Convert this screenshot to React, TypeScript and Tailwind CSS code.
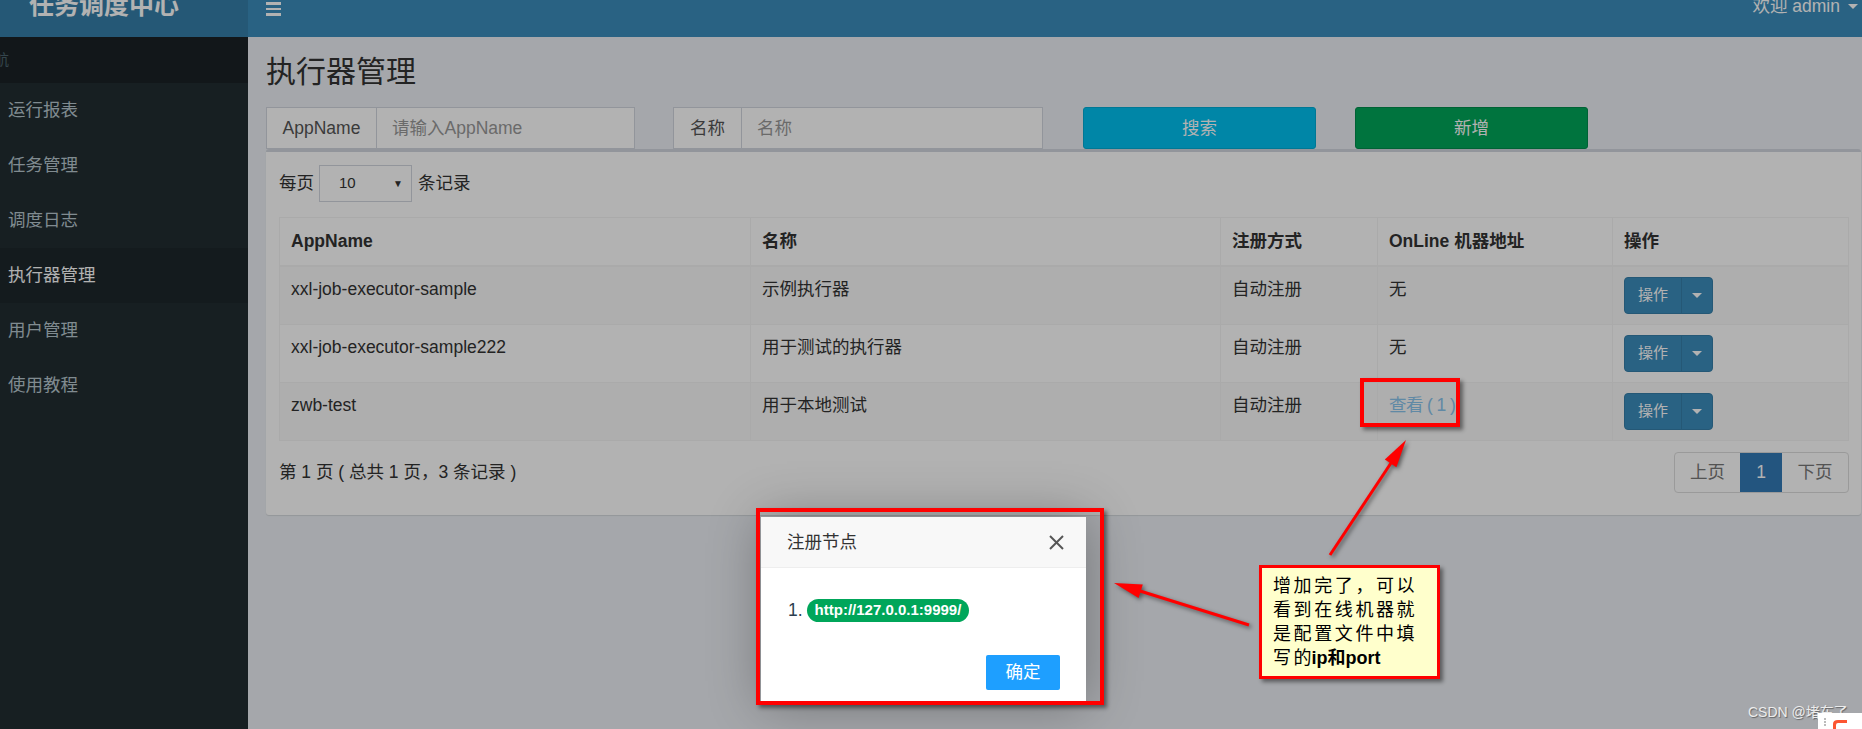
import React from 'react';

interface Executor {
  appName: string;
  title: string;
  regType: string;
  online: number;
}

const executors: Executor[] = [
  { appName: 'xxl-job-executor-sample', title: '示例执行器', regType: '自动注册', online: 0 },
  { appName: 'xxl-job-executor-sample222', title: '用于测试的执行器', regType: '自动注册', online: 0 },
  { appName: 'zwb-test', title: '用于本地测试', regType: '自动注册', online: 1 },
];

const menu = ['运行报表', '任务管理', '调度日志', '执行器管理', '用户管理', '使用教程'];

const Caret: React.FC<{ color?: string }> = ({ color = 'border-t-white' }) => (
  <span className={`inline-block w-0 h-0 border-x-[5px] border-x-transparent border-t-[5px] ${color}`} />
);

const OpButton: React.FC = () => (
  <div className="flex h-[37px] w-[89px] rounded-[4px] border border-[#367fa9] bg-[#3c8dbc] text-white">
    <div className="flex w-[56px] items-center justify-center text-[15px]">操作</div>
    <div className="flex flex-1 items-center justify-center border-l border-[#367fa9]">
      <Caret />
    </div>
  </div>
);

const App: React.FC = () => {
  return (
    <div className="relative w-[1862px] h-[729px] overflow-hidden bg-[#222d32] font-['Liberation_Sans','Noto_Sans_CJK_SC',sans-serif] text-[#333]">
      {/* page, scrolled 25px down */}
      <div className="-mt-[25px] flex flex-col">
        <header className="flex h-[62px]">
          <div className="flex w-[248px] items-center bg-[#367fa9] pl-[29px] text-[25px] font-bold text-white">
            任务调度中心
          </div>
          <div className="flex flex-1 items-center justify-between bg-[#3c8dbc] pl-[18px] text-white">
            <div className="flex flex-col gap-[3px] pt-[6px]">
              <span className="block h-[2.5px] w-[15px] bg-white" />
              <span className="block h-[2.5px] w-[15px] bg-white" />
              <span className="block h-[2.5px] w-[15px] bg-white" />
            </div>
            <div className="flex items-center gap-[8px] pr-[4px] text-[17.5px]">
              <span>欢迎 admin</span>
              <Caret />
            </div>
          </div>
        </header>

        <div className="flex h-[692px]">
          <aside className="w-[248px] shrink-0 bg-[#222d32]">
            <div className="flex h-[46px] items-center overflow-hidden bg-[#1a2226] text-[15px] text-[#4b646f]">
              <span className="-ml-[21px]">导航</span>
            </div>
            {menu.map((m) => (
              <div
                key={m}
                className={
                  m === '执行器管理'
                    ? 'flex h-[55px] items-center bg-[#1e282c] pl-[8px] text-[17.5px] text-white'
                    : 'flex h-[55px] items-center pl-[8px] text-[17.5px] text-[#b8c7ce]'
                }
              >
                {m}
              </div>
            ))}
          </aside>

          <main className="flex-1 bg-[#ecf0f5] pl-[18px] pr-[2px]">
            <h1 className="pt-[18px] text-[30px] leading-[33px]">执行器管理</h1>

            <div className="mt-[19px] flex h-[42px]">
              <div className="flex w-[369px] border border-[#d2d6de] bg-white text-[17.5px]">
                <div className="flex w-[110px] items-center justify-center border-r border-[#d2d6de] text-[#555]">AppName</div>
                <div className="flex flex-1 items-center pl-[15px] text-[#999]">请输入AppName</div>
              </div>
              <div className="ml-[38px] flex w-[370px] border border-[#d2d6de] bg-white text-[17.5px]">
                <div className="flex w-[68px] items-center justify-center border-r border-[#d2d6de] text-[#555]">名称</div>
                <div className="flex flex-1 items-center pl-[15px] text-[#999]">名称</div>
              </div>
              <button className="ml-[40px] w-[233px] rounded-[3px] border border-[#00acd6] bg-[#00c0ef] text-[17.5px] text-white">搜索</button>
              <button className="ml-[39px] w-[233px] rounded-[3px] border border-[#008d4c] bg-[#00a65a] text-[17.5px] text-white">新增</button>
            </div>

            <div className="rounded-[3px] border-t-[3px] border-[#d2d6de] bg-white pb-[22px] pl-[13px] pr-[12px] pt-[13px] shadow-[0_1px_1px_rgba(0,0,0,0.1)]">
              <div className="flex h-[37px] items-center text-[17.5px]">
                <span>每页</span>
                <div className="ml-[5px] flex h-[37px] w-[93px] items-center justify-between border border-[#d2d6de] pl-[19px] pr-[8px] text-[15px]">
                  <span>10</span>
                  <span className="text-[10px]">▼</span>
                </div>
                <span className="ml-[6px]">条记录</span>
              </div>

              <table className="mt-[15px] w-[1569px] table-fixed border-collapse text-[17.5px]">
                <colgroup>
                  <col className="w-[471px]" />
                  <col className="w-[470px]" />
                  <col className="w-[157px]" />
                  <col className="w-[235px]" />
                  <col className="w-[236px]" />
                </colgroup>
                <thead>
                  <tr>
                    {['AppName', '名称', '注册方式', 'OnLine 机器地址', '操作'].map((h) => (
                      <th key={h} className="border border-b-2 border-[#f4f4f4] px-[11px] py-[11px] text-left font-bold leading-[25px]">
                        {h}
                      </th>
                    ))}
                  </tr>
                </thead>
                <tbody>
                  {executors.map((e, i) => (
                    <tr key={e.appName} className={i % 2 === 0 ? 'bg-[#f9f9f9]' : 'bg-white'}>
                      <td className="border border-[#f4f4f4] px-[11px] py-[10px] align-top leading-[25px]">{e.appName}</td>
                      <td className="border border-[#f4f4f4] px-[11px] py-[10px] align-top leading-[25px]">{e.title}</td>
                      <td className="border border-[#f4f4f4] px-[11px] py-[10px] align-top leading-[25px]">{e.regType}</td>
                      <td className="border border-[#f4f4f4] px-[11px] py-[10px] align-top leading-[25px]">
                        {e.online ? <span className="tracking-[-0.6px] text-[#8ac4ec]">查看 ( {e.online} )</span> : '无'}
                      </td>
                      <td className="border border-[#f4f4f4] px-[11px] py-[10px] align-top">
                        <OpButton />
                      </td>
                    </tr>
                  ))}
                </tbody>
              </table>

              <div className="mt-[11px] flex items-center justify-between text-[17.5px]">
                <span>第 1 页 ( 总共 1 页，3 条记录 )</span>
                <div className="flex h-[41px] overflow-hidden rounded-[4px] border border-[#ddd] text-[#777]">
                  <div className="flex w-[65px] items-center justify-center">上页</div>
                  <div className="flex w-[42px] items-center justify-center bg-[#337ab7] text-white">1</div>
                  <div className="flex w-[66px] items-center justify-center">下页</div>
                </div>
              </div>
            </div>
          </main>
        </div>
      </div>

      {/* modal backdrop */}
      <div className="absolute inset-0 bg-black/30" />

      {/* modal */}
      <div className="absolute left-[761px] top-[517px] h-[188px] w-[325px] overflow-hidden bg-white shadow-[1px_1px_50px_rgba(0,0,0,0.3)]">
        <div className="flex h-[51px] items-center justify-between border-b border-[#eee] bg-[#f8f8f8] pl-[26px] pr-[22px] text-[17.5px]">
          <span>注册节点</span>
          <svg width="15" height="15" viewBox="0 0 15 15" stroke="#555" strokeWidth="2">
            <line x1="1" y1="1" x2="14" y2="14" />
            <line x1="14" y1="1" x2="1" y2="14" />
          </svg>
        </div>
        <div className="pl-[27px] pt-[31px]">
          <div className="flex h-[23px] items-center gap-[4px] text-[17.5px] text-[#2c3e50]">
            <span>1.</span>
            <span className="flex h-[23px] items-center rounded-full bg-[#00a65a] px-[8px] text-[15px] font-bold text-white">
              http://127.0.0.1:9999/
            </span>
          </div>
        </div>
        <div className="mt-[33px] flex justify-end pr-[26px]">
          <button className="h-[35px] w-[74px] rounded-[2px] bg-[#1e9fff] text-[17.5px] text-white">确定</button>
        </div>
      </div>

      {/* annotations */}
      <div className="absolute left-[756px] top-[508px] h-[197px] w-[348px] border-4 border-[#ff0000] shadow-[3px_3px_4px_rgba(0,0,0,0.45)]" />
      <div className="absolute left-[1360px] top-[378px] h-[49px] w-[100px] border-4 border-[#ff0000] shadow-[3px_3px_4px_rgba(0,0,0,0.45)]" />

      <svg className="pointer-events-none absolute inset-0 drop-shadow-[2px_2px_2px_rgba(0,0,0,0.5)]" width="1862" height="729">
        <line x1="1330" y1="555" x2="1391" y2="463" stroke="#ff0000" strokeWidth="3" />
        <polygon points="1406,440 1396.4,467.3 1384.8,459.5" fill="#ff0000" />
        <line x1="1249" y1="625" x2="1140" y2="591" stroke="#ff0000" strokeWidth="3" />
        <polygon points="1114,583 1142.8,584.6 1138.6,598" fill="#ff0000" />
      </svg>

      <div className="absolute left-[1259px] top-[565px] h-[114px] w-[181px] border-[3px] border-[#ff0000] bg-[#ffffcc] pl-[11px] pt-[6px] text-[18px] leading-[24px] text-black shadow-[3px_3px_4px_rgba(0,0,0,0.45)]">
        <div className="whitespace-nowrap tracking-[2.6px]">增加完了，可以</div>
        <div className="whitespace-nowrap tracking-[2.6px]">看到在线机器就</div>
        <div className="whitespace-nowrap tracking-[2.6px]">是配置文件中填</div>
        <div className="whitespace-nowrap">
          <span className="tracking-[2.6px]">写</span>的<span className="font-bold">ip和port</span>
        </div>
      </div>

      {/* watermark */}
      <div className="absolute left-[1748px] top-[703px] text-[14px] leading-[18px] text-[#ececec] [text-shadow:1px_1px_1px_rgba(0,0,0,0.4)]">
        CSDN @堵车了
      </div>
      <div className="absolute left-[1818px] top-[713px] flex h-[16px] w-[44px] items-end gap-[5px] bg-white pl-[6px]">
        <span className="mb-[3px] block h-[8px] w-[2px] border-l-2 border-dotted border-[#bbb]" />
        <svg width="18" height="10" viewBox="0 0 18 10">
          <path d="M2 10 V5 Q2 1 7 1 H16 V4 H7 Q5 4 5 6 V10 Z" fill="#fc5531" />
        </svg>
      </div>
    </div>
  );
};

export default App;
